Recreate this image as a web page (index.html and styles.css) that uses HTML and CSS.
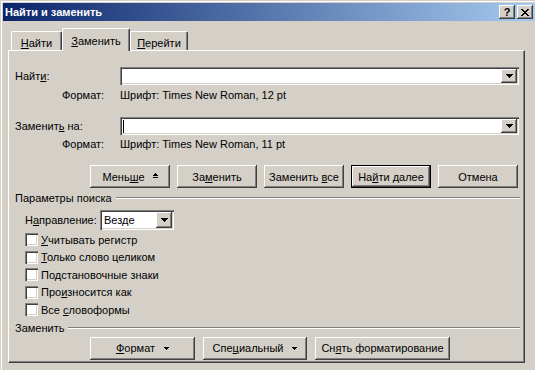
FILE: index.html
```html
<!DOCTYPE html>
<html lang="ru">
  <head>
    <meta charset="UTF-8" />
    <meta name="viewport" content="width=device-width, initial-scale=1.0" />
    <title>Найти и заменить</title>
    <link rel="stylesheet" href="styles.css">
  </head>
  <body>
    <div class="window">
      <div class="titlebar">
        <span class="title">Найти и заменить</span>
        <div class="caption-btn help">?</div>
        <div class="caption-btn close">
          <svg width="8" height="7" viewBox="0 0 8 7" shape-rendering="crispEdges">
            <path d="M0 0h2v1H0zM6 0h2v1H6zM1 1h2v1H1zM5 1h2v1H5zM2 2h4v1H2zM3 3h2v1H3zM2 4h4v1H2zM1 5h2v1H1zM5 5h2v1H5zM0 6h2v1H0zM6 6h2v1H6z" fill="#000"/>
          </svg>
        </div>
      </div>

      <div class="tabs">
        <div class="tab tab-find"><u>Н</u>айти</div>
        <div class="tab tab-replace active"><u>З</u>аменить</div>
        <div class="tab tab-goto"><u>П</u>ерейти</div>
      </div>

      <div class="panel">
        <div class="field-row find-row">
          <span class="field-label">Найт<u>и</u>:</span>
          <div class="combo">
            <div class="combo-text"></div>
            <div class="drop-btn">
              <svg width="7" height="4" viewBox="0 0 7 4" shape-rendering="crispEdges"><path d="M0 0h7v1H0zM1 1h5v1H1zM2 2h3v1H2zM3 3h1v1H3z" fill="#000"/></svg>
            </div>
          </div>
        </div>
        <div class="format-row fmt-first">
          <span class="format-label">Формат:</span>
          <span>Шрифт: Times New Roman, 12 pt</span>
        </div>

        <div class="field-row replace-row">
          <span class="field-label">Заменит<u>ь</u> на:</span>
          <div class="combo">
            <div class="combo-text"><span class="caret"></span></div>
            <div class="drop-btn">
              <svg width="7" height="4" viewBox="0 0 7 4" shape-rendering="crispEdges"><path d="M0 0h7v1H0zM1 1h5v1H1zM2 2h3v1H2zM3 3h1v1H3z" fill="#000"/></svg>
            </div>
          </div>
        </div>
        <div class="format-row fmt-second">
          <span class="format-label">Формат:</span>
          <span>Шрифт: Times New Roman, 11 pt</span>
        </div>

        <div class="button-row">
          <button class="btn"><span>Мень<u>ш</u>е</span>
            <svg class="less-icon" width="5" height="5" viewBox="0 0 5 5" shape-rendering="crispEdges"><path d="M2 0h1v1H2zM1 1h3v1H1zM0 2h5v1H0zM0 4h5v1H0z" fill="#000"/></svg>
          </button>
          <button class="btn"><span>За<u>м</u>енить</span></button>
          <button class="btn"><span>Заменить <u>в</u>се</span></button>
          <button class="btn default"><span>На<u>й</u>ти далее</span></button>
          <button class="btn"><span>Отмена</span></button>
        </div>

        <div class="group-header search-header">
          <span>Параметры поиска</span>
          <div class="etched"></div>
        </div>

        <div class="direction-row">
          <span class="direction-label">Н<u>а</u>правление:</span>
          <div class="combo select">
            <div class="combo-text">Везде</div>
            <div class="drop-btn">
              <svg width="7" height="4" viewBox="0 0 7 4" shape-rendering="crispEdges"><path d="M0 0h7v1H0zM1 1h5v1H1zM2 2h3v1H2zM3 3h1v1H3z" fill="#000"/></svg>
            </div>
          </div>
        </div>

        <div class="checks">
          <div class="check-row"><span class="checkbox"></span><span><u>У</u>читывать регистр</span></div>
          <div class="check-row"><span class="checkbox"></span><span><u>Т</u>олько слово целиком</span></div>
          <div class="check-row"><span class="checkbox"></span><span>По<u>д</u>становочные знаки</span></div>
          <div class="check-row"><span class="checkbox"></span><span>Про<u>и</u>зносится как</span></div>
          <div class="check-row"><span class="checkbox"></span><span>Все <u>с</u>ловоформы</span></div>
        </div>

        <div class="group-header replace-header">
          <span>Заменить</span>
          <div class="etched"></div>
        </div>

        <div class="bottom-row">
          <button class="btn btn-format"><span><u>Ф</u>ормат</span>
            <svg class="down-icon" width="5" height="3" viewBox="0 0 5 3" shape-rendering="crispEdges"><path d="M0 0h5v1H0zM1 1h3v1H1zM2 2h1v1H2z" fill="#000"/></svg>
          </button>
          <button class="btn btn-special"><span>Спе<u>ц</u>иальный</span>
            <svg class="down-icon" width="5" height="3" viewBox="0 0 5 3" shape-rendering="crispEdges"><path d="M0 0h5v1H0zM1 1h3v1H1zM2 2h1v1H2z" fill="#000"/></svg>
          </button>
          <button class="btn btn-clear"><span>Сн<u>я</u>ть форматирование</span></button>
        </div>
      </div>
    </div>
  </body>
</html>
```

FILE: styles.css
```css
* {
  box-sizing: border-box;
}
body {
  margin: 0;
  background-color: #d4d0c8;
  font-family: "Liberation Sans", Arial, sans-serif;
  font-size: 11px;
  color: #000;
  overflow: hidden;
}
u {
  text-decoration: underline;
  text-underline-offset: 1px;
}
.window {
  width: 545px;
  height: 370px;
  padding: 3px 0 0 3px;
  box-shadow: inset 1px 1px 0 #d4d0c8, inset 2px 2px 0 #ffffff;
}
.titlebar {
  width: 532px;
  height: 18px;
  display: flex;
  align-items: center;
  padding: 0 2px;
  background: linear-gradient(to right, #0a246a, #a6caf0);
  color: #ffffff;
  font-weight: bold;
}
.title {
  flex: 1;
}
.caption-btn {
  width: 16px;
  height: 14px;
  display: flex;
  align-items: center;
  justify-content: center;
  background-color: #d4d0c8;
  color: #000;
  box-shadow: inset -1px -1px 0 #404040, inset 1px 1px 0 #ffffff, inset -2px -2px 0 #808080;
  font-size: 11px;
  line-height: 14px;
}
.caption-btn.help {
  margin-right: 2px;
}

/* tabs */
.tabs {
  display: flex;
  align-items: flex-end;
  height: 22px;
  margin-top: 7px;
  padding-left: 8px;
}
.tab {
  height: 19px;
  padding-top: 5px;
  text-align: center;
  line-height: 13px;
  background-color: #d4d0c8;
  border-top: 1px solid #ffffff;
  border-left: 1px solid #ffffff;
  border-right: 1px solid #404040;
  border-radius: 2px 2px 0 0;
  box-shadow: inset -1px 0 0 #808080;
}
.tab-find {
  width: 51px;
}
.tab-replace {
  width: 68px;
}
.tab-goto {
  width: 58px;
}
.tab.active {
  position: relative;
  z-index: 1;
  height: 23px;
  padding-top: 6px;
  margin-bottom: -1px;
}

/* panel */
.panel {
  margin-left: 5px;
  width: 517px;
  height: 313px;
  border-top: 1px solid #ffffff;
  border-left: 1px solid #ffffff;
  border-right: 1px solid #404040;
  border-bottom: 1px solid #404040;
  box-shadow: inset -1px -1px 0 #808080;
}
.field-row {
  display: flex;
  align-items: center;
  height: 18px;
  padding-left: 6px;
}
.find-row {
  margin-top: 16px;
}
.replace-row {
  margin-top: 15px;
}
.field-label {
  width: 105px;
}
.combo {
  display: flex;
  width: 399px;
  height: 18px;
  padding: 2px;
  background-color: #ffffff;
  box-shadow: inset 1px 1px 0 #808080, inset 2px 2px 0 #404040, inset -1px -1px 0 #ffffff, inset -2px -2px 0 #d4d0c8;
}
.combo-text {
  flex: 1;
  display: flex;
  align-items: center;
  padding-left: 1px;
}
.caret {
  width: 1px;
  height: 13px;
  background-color: #000;
}
.drop-btn {
  width: 16px;
  display: flex;
  align-items: center;
  justify-content: center;
  background-color: #d4d0c8;
  box-shadow: inset -1px -1px 0 #404040, inset 1px 1px 0 #ffffff, inset -2px -2px 0 #808080;
}
.format-row {
  display: flex;
  height: 14px;
  line-height: 14px;
  padding-left: 53px;
}
.fmt-first {
  margin-top: 3px;
}
.fmt-second {
  margin-top: 2px;
}
.format-label {
  width: 58px;
}

/* buttons */
.button-row,
.bottom-row {
  display: flex;
  height: 23px;
  padding-left: 81px;
}
.button-row {
  margin-top: 14px;
  gap: 7px;
}
.bottom-row {
  margin-top: 2px;
  gap: 8px;
}
.btn {
  width: 80px;
  height: 23px;
  padding: 0;
  border: none;
  background-color: #d4d0c8;
  font: inherit;
  color: #000;
  box-shadow: inset -1px -1px 0 #404040, inset 1px 1px 0 #ffffff, inset -2px -2px 0 #808080;
  display: flex;
  align-items: center;
  justify-content: center;
  white-space: pre;
}
.btn.default {
  box-shadow: inset 0 0 0 1px #000000, inset -2px -2px 0 #404040, inset 2px 2px 0 #ffffff, inset -3px -3px 0 #808080;
}
.less-icon {
  margin-left: 8px;
  margin-top: -2px;
}
.down-icon {
  margin-left: 9px;
}
.btn-format {
  width: 105px;
}
.btn-special {
  width: 104px;
}
.btn-clear {
  width: 135px;
}

/* groups */
.group-header {
  display: flex;
  align-items: center;
  height: 14px;
  padding-left: 6px;
  margin-right: 4px;
}
.search-header {
  margin-top: 3px;
}
.replace-header {
  margin-top: 2px;
}
.etched {
  flex: 1;
  height: 2px;
  margin-left: 4px;
  border-top: 1px solid #808080;
  border-bottom: 1px solid #ffffff;
}
.direction-row {
  display: flex;
  align-items: center;
  height: 20px;
  margin-top: 5px;
  padding-left: 16px;
}
.direction-label {
  width: 75px;
}
.combo.select {
  width: 74px;
  height: 20px;
}
.select .combo-text {
  padding-left: 2px;
}
.checks {
  margin-top: 1px;
}
.check-row {
  display: flex;
  align-items: center;
  height: 17.5px;
  padding-left: 16px;
  gap: 3px;
}
.checkbox {
  width: 13px;
  height: 13px;
  background-color: #ffffff;
  box-shadow: inset 1px 1px 0 #808080, inset 2px 2px 0 #404040, inset -1px -1px 0 #ffffff, inset -2px -2px 0 #d4d0c8;
}
```
